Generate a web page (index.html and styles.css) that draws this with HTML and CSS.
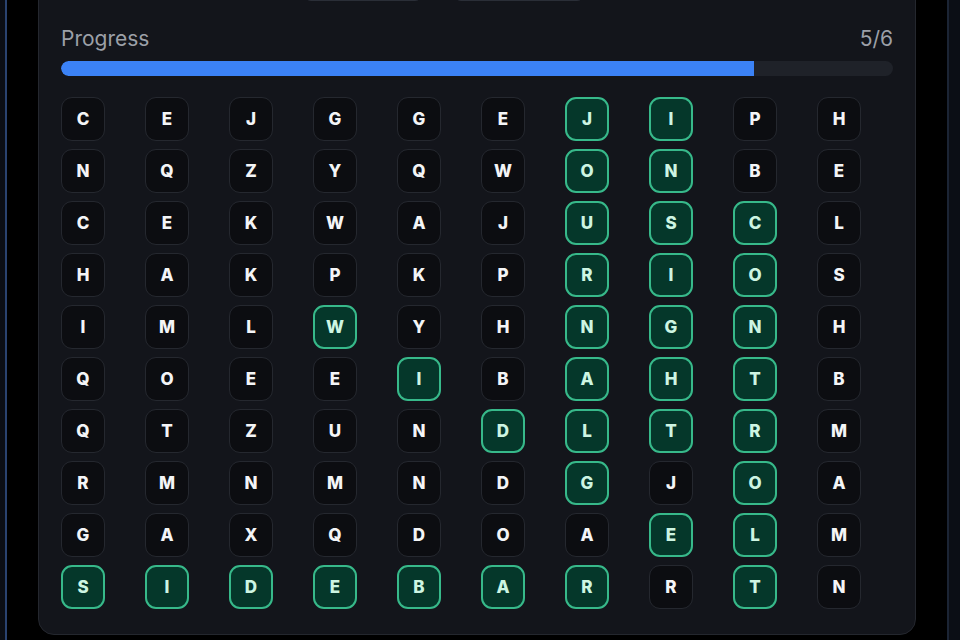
FILE: index.html
```html
<!DOCTYPE html>
<html lang="en">
<head>
  <meta charset="UTF-8" />
  <meta name="viewport" content="width=device-width, initial-scale=1.0" />
  <title>Word Search</title>
  <link rel="stylesheet" href="styles.css">
</head>
<body>
  <div class="frame">
    <div class="card">
      <div class="toolbar">
        <button class="tool-btn wide">New Puzzle</button>
        <button class="tool-btn wider">Show Words</button>
      </div>

      <div class="progress-head">
        <span>Progress</span>
        <span>5/6</span>
      </div>
      <div class="progress-track">
        <div class="progress-fill" style="width: 83.33%"></div>
      </div>

      <div class="grid" id="grid"></div>
    </div>
  </div>

  <script>
    const rows = [
      "CEJGGEJIPH",
      "NQZYQWONBE",
      "CEKWAJUSCL",
      "HAKPKPRIOS",
      "IMLWYHNGNH",
      "QOEEIBAHTB",
      "QTZUNDLTRM",
      "RMNMNDGJOA",
      "GAXQDOAELM",
      "SIDEBARRTN"
    ];
    // found cells as "row,col" (0-based)
    const found = new Set([
      "0,6","1,6","2,6","3,6","4,6","5,6","6,6",
      "0,7","1,7","2,7","3,7","4,7","5,7","6,7",
      "2,8","3,8","4,8","5,8","6,8","7,8","8,8",
      "4,3","5,4","6,5","7,6","8,7","9,8",
      "9,0","9,1","9,2","9,3","9,4","9,5","9,6"
    ]);

    const grid = document.getElementById("grid");
    rows.forEach((row, r) => {
      row.split("").forEach((ch, c) => {
        const cell = document.createElement("div");
        cell.className = found.has(r + "," + c) ? "cell found" : "cell";
        cell.textContent = ch;
        grid.appendChild(cell);
      });
    });
  </script>
</body>
</html>
```

FILE: styles.css
```css
* {
  box-sizing: border-box;
}

html,
body {
  height: 100%;
}

body {
  margin: 0;
  background: #0b0e15;
  font-family: Inter, "Noto Sans", sans-serif;
  overflow: hidden;
}

.frame {
  display: flow-root;
  width: 944px;
  height: 100%;
  margin-left: 5px;
  padding-left: 31px;
  background: #000;
  border-left: 2px solid #2a4370;
  border-right: 2px solid #1b2434;
}

.card {
  width: 878px;
  margin-top: -60px;
  padding: 22px 22px 25px;
  background: #13151b;
  border: 1px solid #24272e;
  border-radius: 16px;
}

.toolbar {
  display: flex;
  gap: 30px;
  padding-left: 242px;
  margin-bottom: 24px;
}

.tool-btn {
  height: 38px;
  background: #181b22;
  color: #c9ccd3;
  border: 1px solid #2a2e37;
  border-radius: 8px;
  font-family: inherit;
  font-size: 14px;
}

.tool-btn.wide {
  width: 120px;
}

.tool-btn.wider {
  width: 132px;
}

.progress-head {
  display: flex;
  justify-content: space-between;
  color: #9ca0a8;
  font-size: 21px;
  line-height: 28px;
  margin-bottom: 8px;
}

.progress-track {
  height: 15px;
  background: #1f2229;
  border-radius: 8px;
  overflow: hidden;
  margin-bottom: 21px;
}

.progress-fill {
  height: 100%;
  background: #3b82f6;
  border-radius: 8px 0 0 8px;
}

.grid {
  display: grid;
  grid-template-columns: repeat(10, 1fr);
  column-gap: 8px;
  row-gap: 8px;
}

.cell {
  width: 44px;
  height: 44px;
  display: flex;
  align-items: center;
  justify-content: center;
  background: #0c0d11;
  border: 1px solid #25282f;
  border-radius: 11px;
  color: #f4f5f7;
  font-size: 17px;
  font-weight: 800;
}

.cell.found {
  background: #05372a;
  border: 2px solid #37b98a;
  color: #cdf5e2;
}
```
